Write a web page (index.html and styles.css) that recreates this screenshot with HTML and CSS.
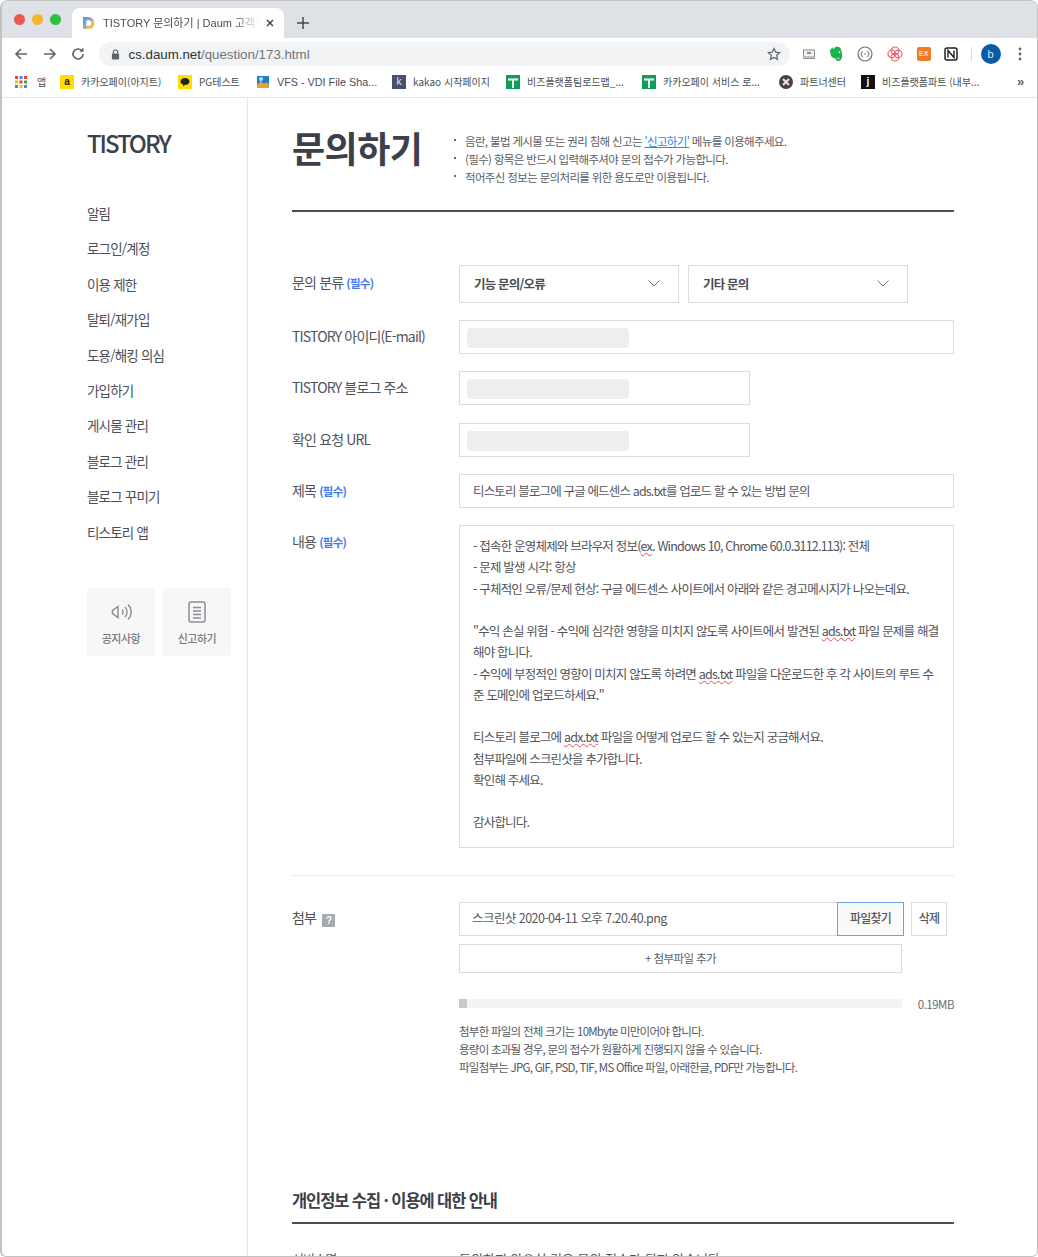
FILE: index.html
```html
<!DOCTYPE html>
<html lang="ko">
<head>
  <meta charset="UTF-8" />
  <title>TISTORY 문의하기 | Daum 고객센터</title>
  <link rel="stylesheet" href="styles.css">
</head>
<body>
  <div class="window">
    <div class="tabstrip">
      <div class="lights">
        <span class="light light-red"></span>
        <span class="light light-yellow"></span>
        <span class="light light-green"></span>
      </div>
      <div class="tab">
        <svg class="favicon" viewBox="0 0 12 12" width="12" height="12">
          <defs>
            <linearGradient id="fav" x1="0" y1="0" x2="1" y2="1">
              <stop offset="0" stop-color="#4f8ff0"/>
              <stop offset="0.45" stop-color="#8fa7d8"/>
              <stop offset="0.7" stop-color="#f6c445"/>
              <stop offset="1" stop-color="#ee6a5f"/>
            </linearGradient>
          </defs>
          <path d="M0 0h5.500a6 6 0 0 1 0 12H0zM3.400 3.200v5.600h2a2.800 2.800 0 0 0 0-5.600z" fill="url(#fav)" fill-rule="evenodd"/>
        </svg>
        <span class="tab-title">TISTORY 문의하기 | Daum 고객센터</span>
        <svg class="tab-close" viewBox="0 0 10 10" width="10" height="10"><path d="M2 2l6 6M8 2l-6 6" stroke="#45484d" stroke-width="1.500" fill="none"/></svg>
      </div>
      <svg class="new-tab" viewBox="0 0 12 12" width="12" height="12"><path d="M6 0v12M0 6h12" stroke="#45484d" stroke-width="1.500" fill="none"/></svg>
    </div>

    <div class="toolbar">
      <svg class="nav-btn" viewBox="0 0 16 16" width="16" height="16"><path d="M14 8H3M8 3L3 8l5 5" stroke="#5f6368" stroke-width="1.600" fill="none"/></svg>
      <svg class="nav-btn" viewBox="0 0 16 16" width="16" height="16"><path d="M2 8h11M8 3l5 5-5 5" stroke="#5f6368" stroke-width="1.600" fill="none"/></svg>
      <svg class="nav-btn" viewBox="0 0 16 16" width="16" height="16"><path d="M13 8a5 5 0 1 1-1.500-3.600" stroke="#5f6368" stroke-width="1.600" fill="none"/><path d="M13.500 1.600v4.200H9.300z" fill="#5f6368"/></svg>
      <div class="omnibox">
        <svg class="lock" viewBox="0 0 10 12" width="9" height="11"><path d="M2.500 5V3.500a2.500 2.500 0 0 1 5 0V5" stroke="#5f6368" stroke-width="1.300" fill="none"/><rect x="1" y="5" width="8" height="6.500" rx="1" fill="#5f6368"/></svg>
        <span class="url"><b>cs.daum.net</b>/question/173.html</span>
        <svg class="star" viewBox="0 0 14 14" width="14" height="14"><path d="M7 1.400l1.700 3.700 4 .5-3 2.700.8 4L7 10.400l-3.500 1.900.8-4-3-2.700 4-.5z" stroke="#5f6368" stroke-width="1.200" fill="none"/></svg>
      </div>
      <div class="extensions">
        <svg viewBox="0 0 14 14" width="14" height="14"><rect x="1.500" y="3" width="11" height="7" fill="#f1f1f1" stroke="#8a8d91"/><rect x="5" y="5" width="4" height="2" fill="#8a8d91"/><path d="M1 11.500h12" stroke="#8a8d91"/></svg>
        <svg viewBox="0 0 14 16" width="14" height="16"><path d="M.8 4.200L4 1.200 4.300 3.600 6.200 1c2-.6 4.800 0 5.400 1.400.9 2 1.600 5 1.600 7 0 3.500-1.800 5.600-3.800 5.600-2 0-3-1-2.700-2.500-1.400 0-4.300-1-4.900-3-.4-1.500-.6-3.300-1-5.300z" fill="#1db34a"/><circle cx="10.400" cy="6.200" r=".9" fill="#e6f7ec"/><path d="M8 12.600c.9-.5 2-.5 2.700.2" stroke="#e6f7ec" stroke-width=".8" fill="none"/></svg>
        <svg viewBox="0 0 16 16" width="16" height="16"><circle cx="8" cy="8" r="7" fill="none" stroke="#6c6f73" stroke-width="1.200"/><path d="M5.500 5L4 8l1.500 3M10.500 5L12 8l-1.500 3" stroke="#6c6f73" fill="none"/><circle cx="8" cy="8" r=".8" fill="#6c6f73"/></svg>
        <svg viewBox="0 0 16 16" width="16" height="16" fill="none" stroke="#f2606a" stroke-width="1.200"><circle cx="8" cy="4.800" r="3.800"/><circle cx="8" cy="11.200" r="3.800"/><circle cx="4.800" cy="8" r="3.800"/><circle cx="11.200" cy="8" r="3.800"/></svg>
        <span class="ext-ex">EX</span>
        <svg viewBox="0 0 14 14" width="14" height="14"><rect x="1" y="1" width="12" height="12" rx="2" fill="#fff" stroke="#222" stroke-width="1.500"/><path d="M4 10.500V3.500l6 7V3.500" stroke="#222" stroke-width="1.400" fill="none"/></svg>
      </div>
      <span class="tool-sep"></span>
      <span class="avatar">b</span>
      <svg class="menu-dots" viewBox="0 0 4 14" width="4" height="14"><circle cx="2" cy="2" r="1.400" fill="#5f6368"/><circle cx="2" cy="7" r="1.400" fill="#5f6368"/><circle cx="2" cy="12" r="1.400" fill="#5f6368"/></svg>
    </div>

    <div class="bookmarks">
      <div class="bm">
        <svg class="bm-icon" viewBox="0 0 12 12" width="12" height="12">
          <rect x="0" y="0" width="3" height="3" fill="#ea4335"/><rect x="4.500" y="0" width="3" height="3" fill="#4285f4"/><rect x="9" y="0" width="3" height="3" fill="#ea4335"/>
          <rect x="0" y="4.500" width="3" height="3" fill="#fbbc05"/><rect x="4.500" y="4.500" width="3" height="3" fill="#ea4335"/><rect x="9" y="4.500" width="3" height="3" fill="#34a853"/>
          <rect x="0" y="9" width="3" height="3" fill="#34a853"/><rect x="4.500" y="9" width="3" height="3" fill="#fbbc05"/><rect x="9" y="9" width="3" height="3" fill="#4285f4"/>
        </svg>
        <span>앱</span>
      </div>
      <div class="bm"><span class="bm-tile tile-yellow">a</span><span>카카오페이(아지트)</span></div>
      <div class="bm">
        <span class="bm-tile tile-yellow"><svg viewBox="0 0 10 10" width="10" height="10"><path d="M5 1c2.500 0 4.500 1.500 4.500 3.400S7.500 7.800 5 7.800l-2 1.700.3-2C1.500 7 .5 5.800.5 4.400.5 2.500 2.500 1 5 1z" fill="#222"/></svg></span>
        <span>PG테스트</span>
      </div>
      <div class="bm">
        <svg class="bm-svg" viewBox="0 0 14 14" width="14" height="14"><rect x="1" y="1" width="12" height="12" fill="#1f7fc4"/><path d="M1 10l4-4 3 3 2-2 3 3v3H1z" fill="#e9a23b"/><circle cx="5" cy="4" r="2" fill="#b8e0f5"/></svg>
        <span class="bm-latin">VFS - VDI File Sha...</span>
      </div>
      <div class="bm"><span class="bm-tile tile-navy">k</span><span>kakao 시작페이지</span></div>
      <div class="bm"><span class="bm-tile tile-green"><svg viewBox="0 0 14 14" width="14" height="14"><path d="M2 4.500h10M7 4.500V13" stroke="#fff" stroke-width="1.800"/></svg></span><span>비즈플랫폼팀로드맵_...</span></div>
      <div class="bm"><span class="bm-tile tile-green"><svg viewBox="0 0 14 14" width="14" height="14"><path d="M2 4.500h10M7 4.500V13" stroke="#fff" stroke-width="1.800"/></svg></span><span>카카오페이 서비스 로...</span></div>
      <div class="bm">
        <svg class="bm-svg" viewBox="0 0 14 14" width="14" height="14"><circle cx="7" cy="7" r="7" fill="#4d3d40"/><path d="M4 4l6 6M10 4l-6 6" stroke="#e8e0e0" stroke-width="2.200"/></svg>
        <span>파트너센터</span>
      </div>
      <div class="bm"><span class="bm-tile tile-black">j</span><span>비즈플랫폼파트 (내부...</span></div>
      <div class="bm-more">»</div>
    </div>

    <div class="page">
      <aside class="sidebar">
        <div class="logo">TISTORY</div>
        <ul class="side-nav">
          <li>알림</li>
          <li>로그인/계정</li>
          <li>이용 제한</li>
          <li>탈퇴/재가입</li>
          <li>도용/해킹 의심</li>
          <li>가입하기</li>
          <li>게시물 관리</li>
          <li>블로그 관리</li>
          <li>블로그 꾸미기</li>
          <li>티스토리 앱</li>
        </ul>
        <div class="side-btns">
          <div class="side-btn">
            <svg viewBox="0 0 24 20" width="24" height="20"><path d="M9 4.500L3.500 8.500v3L9 15.500z" fill="none" stroke="#8b8f94" stroke-width="1.500"/><path d="M13 7.500a3.500 3.500 0 0 1 0 5M16 5a7 7 0 0 1 0 10M19 2.500a10.500 10.500 0 0 1 0 15" fill="none" stroke="#8b8f94" stroke-width="1.400"/></svg>
            <span>공지사항</span>
          </div>
          <div class="side-btn">
            <svg viewBox="0 0 20 22" width="20" height="22"><rect x="2" y="1" width="16" height="20" rx="2" fill="none" stroke="#8b8f94" stroke-width="1.500"/><path d="M6 6.500h8M6 10h8M6 13.500h8M6 17h8" stroke="#8b8f94" stroke-width="1.300"/></svg>
            <span>신고하기</span>
          </div>
        </div>
      </aside>

      <main class="content">
        <div class="head">
          <h1 class="page-title">문의하기</h1>
          <ul class="head-notes">
            <li>음란, 불법 게시물 또는 권리 침해 신고는 <a href="#">'신고하기'</a> 메뉴를 이용해주세요.</li>
            <li>(필수) 항목은 반드시 입력해주셔야 문의 접수가 가능합니다.</li>
            <li>적어주신 정보는 문의처리를 위한 용도로만 이용됩니다.</li>
          </ul>
        </div>

        <div class="form">
          <div class="row">
            <div class="label label-select">문의 분류 <em>(필수)</em></div>
            <div class="selects">
              <div class="select">기능 문의/오류
                <svg viewBox="0 0 12 7" width="12" height="7"><path d="M.5.5L6 6 11.500.5" fill="none" stroke="#777" stroke-width="1"/></svg>
              </div>
              <div class="select">기타 문의
                <svg viewBox="0 0 12 7" width="12" height="7"><path d="M.5.5L6 6 11.500.5" fill="none" stroke="#777" stroke-width="1"/></svg>
              </div>
            </div>
          </div>
          <div class="row">
            <div class="label">TISTORY 아이디(E-mail)</div>
            <div class="input input-full"><span class="masked"></span></div>
          </div>
          <div class="row">
            <div class="label">TISTORY 블로그 주소</div>
            <div class="input input-short"><span class="masked"></span></div>
          </div>
          <div class="row row-tight">
            <div class="label">확인 요청 URL</div>
            <div class="input input-short"><span class="masked"></span></div>
          </div>
          <div class="row">
            <div class="label">제목 <em>(필수)</em></div>
            <div class="input input-full input-text">티스토리 블로그에 구글 에드센스 ads.txt를 업로드 할 수 있는 방법 문의</div>
          </div>
          <div class="row row-text">
            <div class="label">내용 <em>(필수)</em></div>
            <div class="textarea">
              <p>- 접속한 운영체제와 브라우저 정보(<u>ex</u>. Windows 10, Chrome 60.0.3112.113): 전체</p>
              <p>- 문제 발생 시각: 항상</p>
              <p>- 구체적인 오류/문제 현상: 구글 에드센스 사이트에서 아래와 같은 경고메시지가 나오는데요.</p>
              <p>&nbsp;</p>
              <p>"수익 손실 위험 - 수익에 심각한 영향을 미치지 않도록 사이트에서 발견된 <u>ads.txt</u> 파일 문제를 해결</p>
              <p>해야 합니다.</p>
              <p>- 수익에 부정적인 영향이 미치지 않도록 하려면 <u>ads.txt</u> 파일을 다운로드한 후 각 사이트의 루트 수</p>
              <p>준 도메인에 업로드하세요."</p>
              <p>&nbsp;</p>
              <p>티스토리 블로그에 <u>adx.txt</u> 파일을 어떻게 업로드 할 수 있는지 궁금해서요.</p>
              <p>첨부파일에 스크린샷을 추가합니다.</p>
              <p>확인해 주세요.</p>
              <p>&nbsp;</p>
              <p>감사합니다.</p>
            </div>
          </div>
          <hr class="divider" />
          <div class="row row-attach">
            <div class="label">첨부 <span class="help">?</span></div>
            <div class="attach">
              <div class="file-row">
                <div class="file-name">스크린샷 2020-04-11 오후 7.20.40.png</div>
                <div class="file-find">파일찾기</div>
                <div class="file-del">삭제</div>
              </div>
              <div class="file-add">+ 첨부파일 추가</div>
              <div class="usage">
                <div class="usage-bar"><div class="usage-fill" style="width:1.9%"></div></div>
                <span class="usage-size">0.19MB</span>
              </div>
              <p class="attach-note">첨부한 파일의 전체 크기는 10Mbyte 미만이어야 합니다.<br>용량이 초과될 경우, 문의 접수가 원활하게 진행되지 않을 수 있습니다.<br>파일첨부는 JPG, GIF, PSD, TIF, MS Office 파일, 아래한글, PDF만 가능합니다.</p>
            </div>
          </div>
        </div>

        <h2 class="sub-title">개인정보 수집 · 이용에 대한 안내</h2>
        <div class="row row-cut">
          <div class="label">서비스명</div>
          <div class="cut-text">동의하지 않으실 경우 문의 접수가 되지 않습니다</div>
        </div>
      </main>
    </div>
  </div>
</body>
</html>
```
FILE: styles.css
```css
* {
  box-sizing: border-box;
}
html, body {
  margin: 0;
  padding: 0;
  height: 100%;
  overflow: hidden;
  background: #fff;
}
body {
  font-family: "Noto Sans CJK KR", "Noto Sans", sans-serif;
  color: #444;
}
ul {
  list-style: none;
  margin: 0;
  padding: 0;
}
.window {
  height: 1257px;
  overflow: hidden;
  border: 1px solid #c2c2c2;
  border-left-width: 2px;
  border-radius: 8px 8px 6px 6px;
  background: #fff;
}

/* browser chrome */
.tabstrip {
  height: 37px;
  background: #dee1e6;
  display: flex;
  align-items: flex-end;
}
.lights {
  display: flex;
  gap: 7px;
  padding: 0 0 13px 12px;
  width: 70px;
}
.light {
  width: 11px;
  height: 11px;
  border-radius: 50%;
}
.light-red { background: #f2574e; }
.light-yellow { background: #f8b52c; }
.light-green { background: #2cc140; }
.tab {
  width: 212px;
  height: 30px;
  background: #fff;
  border-radius: 8px 8px 0 0;
  display: flex;
  align-items: center;
  padding: 0 9px 1px 11px;
  font-family: "Liberation Sans", "Noto Sans CJK KR", sans-serif;
  font-size: 11px;
  color: #4a4d52;
}
.favicon {
  flex: none;
  margin-right: 8px;
}
.tab-title {
  flex: 1;
  overflow: hidden;
  white-space: nowrap;
  line-height: 14px;
  -webkit-mask-image: linear-gradient(90deg, #000 85%, transparent);
  mask-image: linear-gradient(90deg, #000 85%, transparent);
}
.tab-close {
  flex: none;
  margin-left: 6px;
}
.new-tab {
  margin: 0 0 9px 13px;
}
.toolbar {
  height: 30px;
  display: flex;
  align-items: center;
  padding: 2px 0 0 11px;
}
.nav-btn {
  flex: none;
  margin-right: 12.5px;
}
.omnibox {
  width: 691px;
  height: 24px;
  border-radius: 12px;
  background: #f1f3f4;
  display: flex;
  align-items: center;
  padding: 0 9px 0 12px;
  font-family: "Liberation Sans", sans-serif;
  font-size: 13.3px;
  color: #70757a;
}
.lock {
  margin-right: 9px;
}
.url {
  flex: 1;
}
.url b {
  font-weight: 400;
  color: #2f3134;
}
.extensions {
  display: flex;
  align-items: center;
  justify-content: space-between;
  width: 157px;
  margin-left: 12px;
}
.ext-ex {
  width: 14px;
  height: 14px;
  border-radius: 2px;
  background: #f07a26;
  color: #fde3cd;
  font: 700 7px/14px "Liberation Sans", sans-serif;
  text-align: center;
}
.tool-sep {
  width: 1px;
  height: 14px;
  background: #dadce0;
  margin: 0 9px 0 12px;
}
.avatar {
  width: 20px;
  height: 20px;
  border-radius: 50%;
  background: #0b5aa5;
  color: #dfe9f5;
  font: 11px/20px "Liberation Sans", sans-serif;
  text-align: center;
}
.menu-dots {
  margin-left: 17px;
}
.bookmarks {
  height: 30px;
  display: grid;
  grid-template-columns: 45px 118px 78px 136px 114px 136px 137px 82px 156px 1fr;
  align-items: center;
  padding: 0 0 2px 13px;
  border-bottom: 1px solid #e4e4e4;
  font-size: 10px;
  color: #4a4d52;
  white-space: nowrap;
}
.bm {
  display: flex;
  align-items: center;
  gap: 7px;
  overflow: hidden;
}
.bm-icon {
  margin-right: 3px;
}
.bm-latin {
  font-family: "Liberation Sans", sans-serif;
  font-size: 10.8px;
}
.bm-tile {
  flex: none;
  width: 14px;
  height: 14px;
  display: flex;
  align-items: center;
  justify-content: center;
  font: 700 10px/14px "Liberation Sans", sans-serif;
}
.tile-yellow { background: #fedd00; color: #222; }
.tile-navy { background: #44546f; color: #e4e8ee; font-weight: 400; }
.tile-green { background: #0f9d58; }
.tile-black { background: #111; color: #fff; }
.bm-svg {
  flex: none;
}
.bm-more {
  font: 700 13px "Liberation Sans", sans-serif;
  color: #5f6368;
}

/* page layout */
.page {
  display: flex;
  height: 1160px;
}
.sidebar {
  width: 246px;
  flex: none;
  border-right: 1px solid #e9e9e9;
  padding: 32px 0 0 85px;
}
.logo {
  font-size: 24px;
  font-weight: 500;
  line-height: 26px;
  letter-spacing: -2.07px;
  color: #3c4049;
}
.side-nav {
  margin-top: 40px;
}
.side-nav li {
  height: 35.4px;
  line-height: 35.4px;
  font-size: 13.5px;
  letter-spacing: -.8px;
  color: #4b4e55;
  white-space: nowrap;
}
.side-btns {
  display: flex;
  gap: 8px;
  margin-top: 38px;
}
.side-btn {
  width: 68px;
  height: 68px;
  background: #f7f7f7;
  border-radius: 2px;
  display: flex;
  flex-direction: column;
  align-items: center;
  padding-top: 13px;
  font-size: 11px;
  font-weight: 500;
  letter-spacing: -.5px;
  color: #777b80;
}
.side-btn svg {
  height: 22px;
}
.side-btn span {
  margin-top: 7px;
}

.content {
  width: 662px;
  margin-left: 44px;
  flex: none;
}
.head {
  display: flex;
  height: 114px;
  border-bottom: 2px solid #4c4f5b;
}
.page-title {
  width: 161px;
  margin: 24px 0 0;
  font-size: 36px;
  font-weight: 700;
  line-height: 50px;
  letter-spacing: -.5px;
  color: #3c4049;
  white-space: nowrap;
}
.head-notes {
  padding-top: 34px;
  font-size: 11.5px;
  line-height: 18px;
  letter-spacing: -.65px;
  color: #5a5d63;
  white-space: nowrap;
}
.head-notes li {
  padding-left: 12px;
  position: relative;
}
.head-notes li::before {
  content: "";
  position: absolute;
  left: 1px;
  top: 7px;
  width: 2px;
  height: 2px;
  background: #666;
}
.head-notes a {
  color: #2f86f5;
}

.form {
  padding-top: 53px;
}
.row {
  display: flex;
  margin-bottom: 17px;
}
.row-tight {
  padding-top: 1px;
}
.row-text {
  margin-bottom: 0;
}
.label {
  width: 167px;
  flex: none;
  font-size: 14px;
  line-height: 32px;
  letter-spacing: -.85px;
  color: #50535a;
  white-space: nowrap;
}
.label-select {
  line-height: 35px;
}
.label em {
  font-style: normal;
  font-size: 11.5px;
  font-weight: 700;
  letter-spacing: -.7px;
  color: #3f7cf5;
}
.selects {
  display: flex;
  gap: 9px;
  width: 449px;
}
.select {
  flex: 1;
  height: 38px;
  border: 1px solid #dcdcdc;
  display: flex;
  align-items: center;
  justify-content: space-between;
  padding: 0 18px 1px 14px;
  font-size: 12.5px;
  font-weight: 700;
  letter-spacing: -.8px;
  color: #4b4e55;
}
.input {
  height: 34px;
  border: 1px solid #dcdcdc;
  display: flex;
  align-items: center;
  padding: 0 13px;
  font-size: 12.5px;
  letter-spacing: -.85px;
  color: #55585e;
  white-space: nowrap;
}
.input-text {
  padding-bottom: 2px;
}
.input-full {
  width: 495px;
}
.input-short {
  width: 291px;
}
.input .masked {
  width: 162px;
  height: 20px;
  margin: 1px 0 0 -6px;
  border-radius: 4px;
  background: #eeeeee;
}
.textarea {
  width: 495px;
  height: 323px;
  border: 1px solid #dcdcdc;
  padding: 9px 13px;
  font-size: 12.5px;
  line-height: 21.25px;
  letter-spacing: -.8px;
  color: #4f5258;
  white-space: nowrap;
}
.textarea p {
  margin: 0;
}
.textarea u {
  text-decoration: underline wavy #d9534f 1px;
}
.divider {
  border: 0;
  border-top: 1px solid #ececec;
  margin: 27px 0 26px;
}
.row-attach {
  margin: 0;
}
.row-attach .label {
  line-height: 30px;
}
.help {
  display: inline-block;
  width: 13px;
  height: 13px;
  margin-left: 3px;
  border-radius: 1px;
  background: #a6a9ae;
  color: #fff;
  font: 700 10px/13px "Liberation Sans", sans-serif;
  text-align: center;
  vertical-align: -1px;
}
.attach {
  width: 495px;
}
.file-row {
  display: flex;
  height: 34px;
  font-size: 12.5px;
  letter-spacing: -.55px;
  color: #55585e;
}
.file-name {
  width: 378px;
  border: 1px solid #dcdcdc;
  border-right: 0;
  padding: 0 12px;
  line-height: 30px;
  white-space: nowrap;
}
.file-find {
  width: 67px;
  border: 1px solid #6f9fe6;
  background: #fafafa;
  text-align: center;
  font-size: 12px;
  letter-spacing: -.8px;
  line-height: 30px;
  font-weight: 500;
}
.file-del {
  width: 36px;
  margin-left: 7px;
  border: 1px solid #dcdcdc;
  text-align: center;
  font-size: 12px;
  letter-spacing: -.8px;
  line-height: 30px;
  font-weight: 500;
}
.file-add {
  width: 443px;
  height: 29px;
  margin-top: 8px;
  border: 1px solid #dcdcdc;
  text-align: center;
  font-size: 11.5px;
  line-height: 27px;
  letter-spacing: -.6px;
  color: #5a5d63;
}
.usage {
  display: flex;
  justify-content: space-between;
  align-items: center;
  height: 9px;
  margin-top: 26px;
  font-size: 11.5px;
  letter-spacing: -.5px;
  color: #6a6d72;
}
.usage-bar {
  width: 443px;
  height: 9px;
  background: #f3f3f3;
}
.usage-fill {
  height: 100%;
  background: #c8c8c8;
}
.attach-note {
  margin: 14px 0 0;
  font-size: 11.5px;
  line-height: 18px;
  letter-spacing: -.75px;
  color: #55585e;
  white-space: nowrap;
}
.sub-title {
  margin: 112px 0 0;
  height: 36px;
  border-bottom: 2px solid #4c4f5b;
  font-size: 16.5px;
  font-weight: 700;
  line-height: 24px;
  letter-spacing: -1.1px;
  color: #3c4049;
}
.row-cut {
  margin-top: 18px;
  margin-bottom: 0;
}
.row-cut .label,
.cut-text {
  font-size: 13px;
  line-height: 34px;
  color: #50535a;
}
```
